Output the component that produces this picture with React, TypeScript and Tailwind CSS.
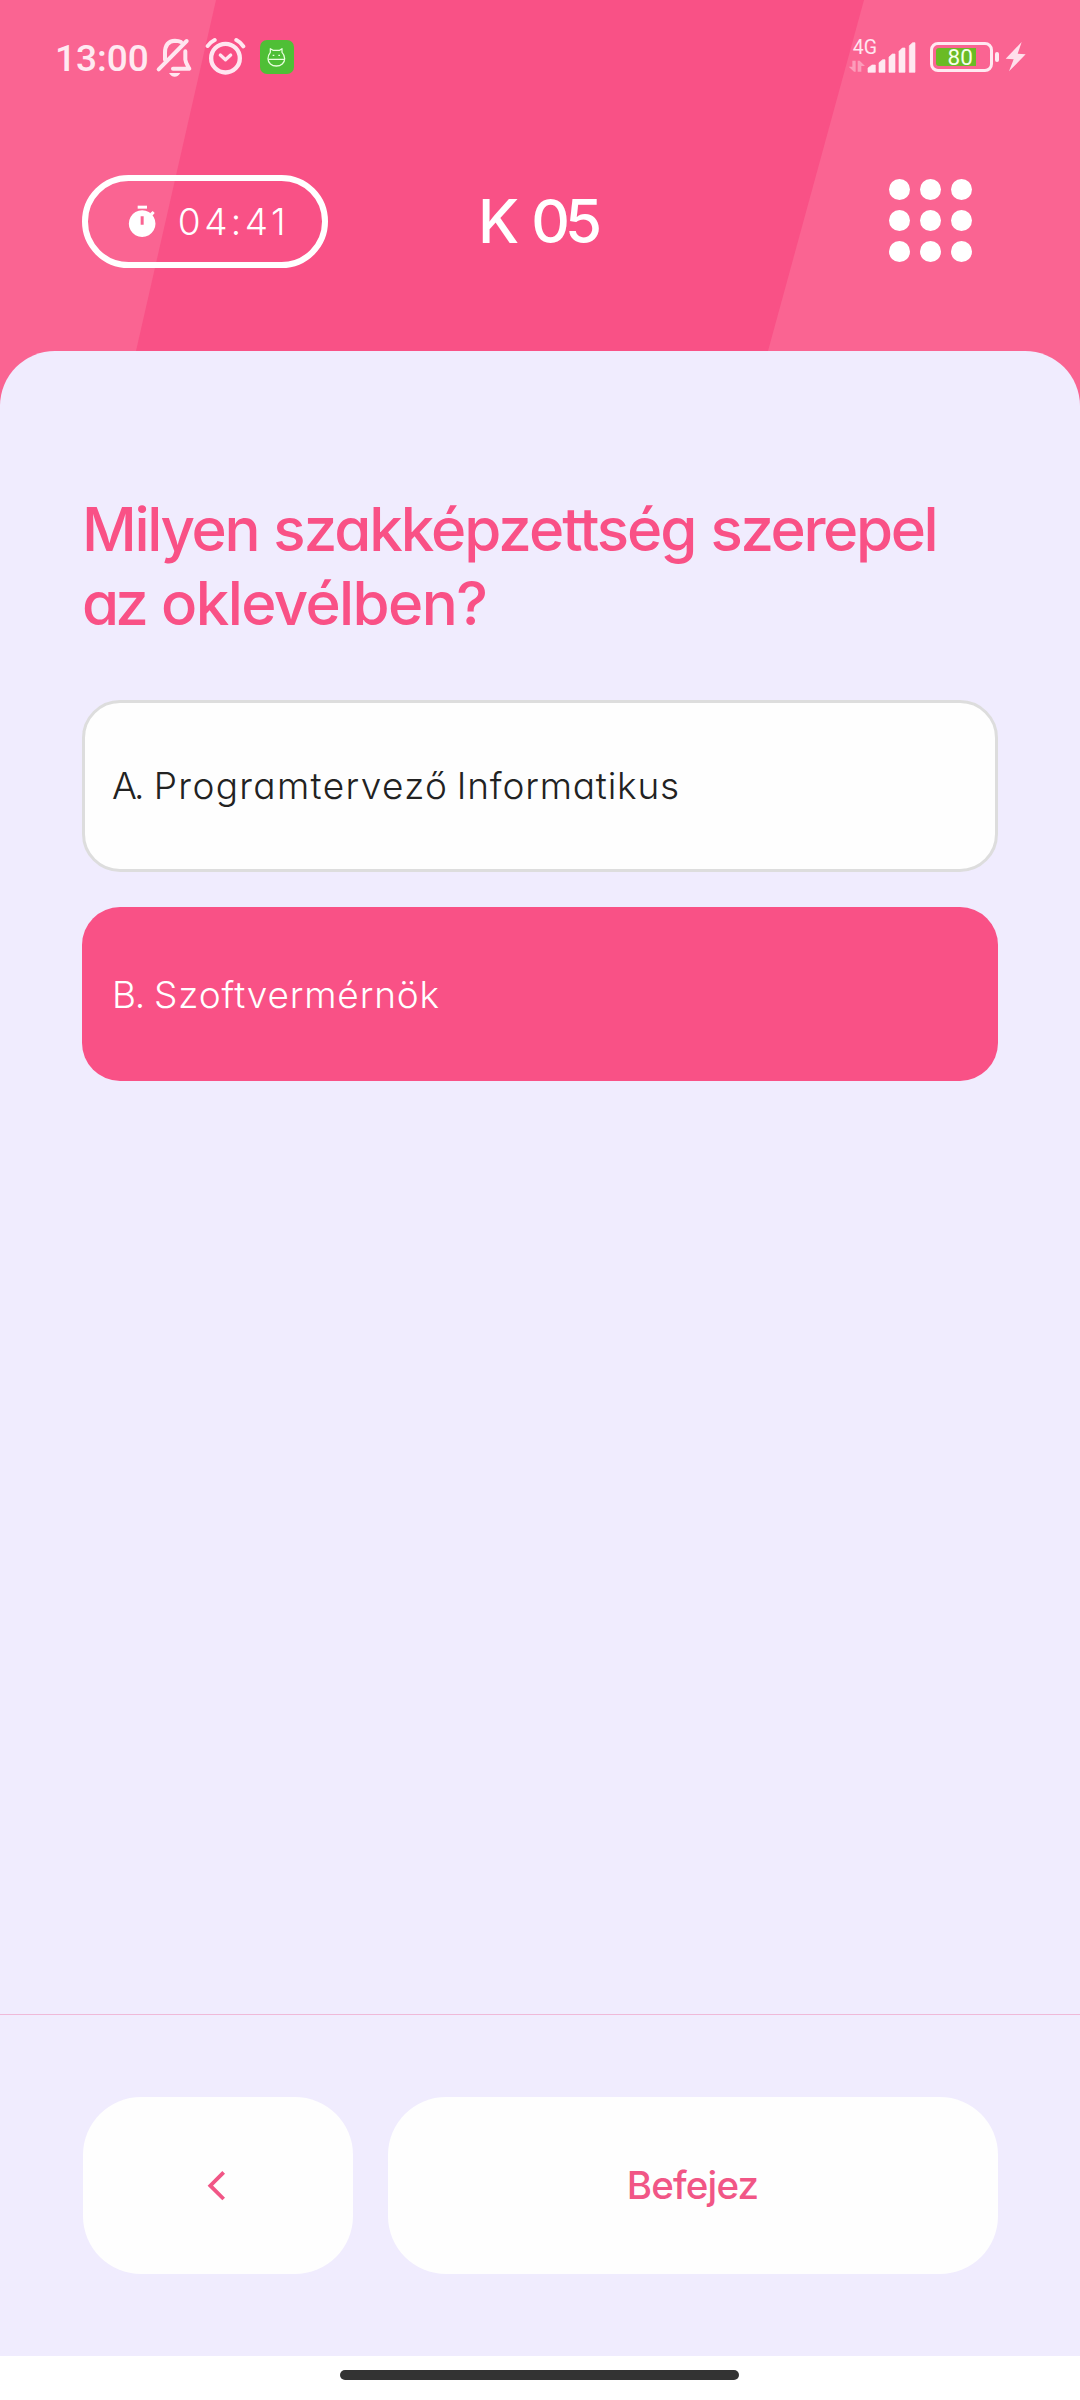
import type { ReactNode } from "react";

function BellOffIcon() {
  return (
    <svg viewBox="345 40 115 140" className="h-[46.67px] w-[38.33px]" fill="none" stroke="#ffe6f0" strokeWidth="12" strokeLinecap="round" strokeLinejoin="round">
      <path d="M375 120V99C375 76 386 64 405 63C412 63 418 64 423 67" />
      <path d="M436 95V120C437 131 444 139 448 147H399" />
      <path d="M440 64L356 149" />
      <path d="M387 160H421C417 167 411 171 404 171C397 171 391 167 387 160Z" fill="#ffe6f0" stroke="none" />
    </svg>
  );
}

function AlarmIcon() {
  return (
    <svg viewBox="495 40 125 140" className="h-[46.67px] w-[41.67px]" fill="none" stroke="#ffe6f0" strokeLinecap="round" strokeLinejoin="round">
      <circle cx="556.5" cy="115.5" r="43" strokeWidth="13" />
      <path d="M541 106L556.5 120L572 106" strokeWidth="10" />
      <path d="M503 79C508 71 516 65 524 61M589 61C597 65 605 72 610 80" strokeWidth="12" />
    </svg>
  );
}

function GreenAppIcon() {
  return (
    <div className="flex size-[34px] items-center justify-center rounded-[7px] bg-[#4fbf36]">
      <svg viewBox="682 82 57 60" className="h-5 w-[19px]" fill="none" stroke="#eaffdf" strokeWidth="3.8" strokeLinejoin="round">
        <path d="M692 98V87L700 92H720L727 87V98C732 103 735 110 735 117C735 130 724 139 710 139C696 139 685 130 685 117C685 110 688 103 692 98Z" />
        <path d="M686 119H734M699 107H704M716 107H721" />
      </svg>
    </div>
  );
}

function Signal() {
  return (
    <div className="relative">
      <svg viewBox="55 40 207 140" className="h-[46.67px] w-[69px]" fill="#ffe9f1">
        <g opacity="0.42">
          <path d="M68 123H78V156H73L57 141H68Z" />
          <path d="M84 156V123H90L106 139H95V156Z" />
        </g>
        <g stroke="#ffe9f1" strokeWidth="2" strokeLinejoin="round">
          <path d="M115 158V145L127 136H137V158Z" />
          <path d="M148 158V129L159 120H166V158Z" />
          <path d="M178 158V112L188 103H196V158Z" />
          <path d="M208 158V95L218 85H226V158Z" />
          <path d="M239 158V78L249 69H256V158Z" />
        </g>
      </svg>
      <span className="absolute top-[3px] left-[4.5px] font-['Roboto',sans-serif] text-[19.5px] leading-[24px] text-[#ffe6f0]">4G</span>
    </div>
  );
}

function Battery() {
  return (
    <div className="flex items-center gap-[2px]">
      <div className="flex h-[30px] w-[63px] rounded-[8px] border-[3px] border-[#ffe9f1] p-[3px]">
        <div className="relative h-[18px] w-[39.5px] rounded-l-[3px] bg-[#6abb25]">
          <span className="absolute top-[0.5px] left-[11.5px] font-['Roboto',sans-serif] text-[22.5px] leading-[18px] font-[450] text-[#f4ffe9]">80</span>
        </div>
      </div>
      <div className="h-[10px] w-[4px] rounded-[2px] bg-[#ffe9f1]" />
    </div>
  );
}

function StatusBar() {
  return (
    <div className="flex h-[112px] items-center pr-[54px] pl-[55px]">
      <span className="mt-[6px] font-['Roboto',sans-serif] text-[37px] leading-[40px] font-medium text-[#ffe9f1]">13:00</span>
      <div className="ml-[6px] flex items-center pt-px">
        <BellOffIcon />
        <div className="ml-[11.7px]">
          <AlarmIcon />
        </div>
        <div className="ml-[13.3px]">
          <GreenAppIcon />
        </div>
      </div>
      <div className="ml-auto flex items-center pt-px">
        <Signal />
        <div className="ml-[12.7px]">
          <Battery />
        </div>
        <svg viewBox="525 66 63 96" className="ml-[6px] h-8 w-[21px]" fill="#ffdfeb">
          <path d="M575 69L527 119L551 121L537 157L587 106L563 104Z" />
        </svg>
      </div>
    </div>
  );
}

function StopwatchIcon() {
  return (
    <svg viewBox="200 160 92 110" className="h-[36.67px] w-[30.67px]" fill="#fff">
      <rect x="232" y="168" width="28" height="9" />
      <path fillRule="evenodd" d="M245.5 182A40 40 0 1 1 245.4 182ZM241 200V225H250V200Z" />
      <path d="M269 191L277 184L283 190L276 198Z" />
    </svg>
  );
}

function Header() {
  return (
    <header className="relative h-[351px] bg-[#f95186]">
      <svg viewBox="0 0 1080 351" className="absolute inset-0 h-full w-full" fill="#fa6492">
        <path d="M0 0H216L136 351H0Z" />
        <path d="M864 0H1080V351H768Z" />
      </svg>
      <div className="relative">
        <StatusBar />
        <div className="mt-[62px] flex h-[93px] items-center px-[82px]">
          <div className="mt-px flex h-[93px] w-[246px] items-center rounded-full border-[6px] border-white pl-[38.7px]">
            <StopwatchIcon />
            <span className="mt-px ml-[20.5px] font-['Inter',sans-serif] text-[37px] leading-none font-[300] tracking-[3.45px] text-white">04:41</span>
          </div>
          <h1 className="ml-[150px] font-['Inter',sans-serif] text-[60px] leading-none font-[460] whitespace-nowrap text-white">
            K <span className="-ml-[4px] tracking-[-5px]">05</span>
          </h1>
          <div className="mr-[26px] ml-auto grid grid-cols-3 gap-[10px]">
            {Array.from({ length: 9 }, (_, i) => (
              <span key={i} className="size-[21px] rounded-full bg-white" />
            ))}
          </div>
        </div>
      </div>
    </header>
  );
}

function Answer({ selected = false, children }: { selected?: boolean; children: ReactNode }) {
  return (
    <div
      className={
        selected
          ? "flex h-[173.5px] items-center rounded-[38px] bg-[#f95186] pt-px pl-[30px] text-white"
          : "flex h-[172px] items-center rounded-[38px] border-[3px] border-[#dddddd] bg-[#fefefe] pb-px pl-[27px] text-[#222222]"
      }
    >
      <p className="text-[37px] leading-none font-[300] whitespace-nowrap">{children}</p>
    </div>
  );
}

export default function App() {
  return (
    <div className="flex h-[2400px] w-[1080px] flex-col overflow-hidden bg-[#fa6492] font-['Inter',sans-serif] [font-feature-settings:'cv11']">
      <Header />
      <main className="flex-1 rounded-t-[55px] bg-[#f0ecfe] px-[82px] pt-[141px]">
        <h2 className="text-[60px] leading-[74px] font-[480] tracking-[-1px] whitespace-nowrap text-[#f95186]">
          <span className="tracking-[-2.3px]">Milyen</span> <span className="tracking-[-2px]">szakképzettség</span>{" "}
          <span className="tracking-[-2.4px]">szerepel</span>
          <br />
          <span className="tracking-[-3.8px]">az</span> <span className="ml-px tracking-[-1.6px]">oklevélben?</span>
        </h2>
        <div className="mt-[60px] flex flex-col gap-[35px]">
          <Answer>
            <span className="tracking-[-3px]">A.</span> <span className="ml-[2px] tracking-[1.35px]">Programtervező</span>{" "}
            <span className="-ml-[2px] tracking-[0.8px]">Informatikus</span>
          </Answer>
          <Answer selected>
            <span className="tracking-[-1.4px]">B.</span> <span className="tracking-[0.83px]">Szoftvermérnök</span>
          </Answer>
        </div>
      </main>
      <footer className="flex h-[342px] items-start gap-[35px] border-t border-[#efb9d8] bg-[#f0ecfe] px-[82.5px] pt-[82px]">
        <button className="flex h-[177px] w-[270px] items-center justify-center rounded-[58px] bg-[#fefefe] pr-[3px]">
          <svg viewBox="440 536 60 100" className="h-[33.33px] w-5" fill="none" stroke="#f15686" strokeWidth="11.5">
            <path d="M493 546L453 586L493 626" />
          </svg>
        </button>
        <button className="flex h-[177px] flex-1 items-center justify-center rounded-[58px] bg-[#fefefe] text-[38.5px] leading-none font-[500] tracking-[-0.8px] text-[#f15686]">
          Befejez
        </button>
      </footer>
      <div className="flex h-[44px] justify-center bg-white pt-[14px] pr-px">
        <div className="h-[10px] w-[399px] rounded-full bg-[#333333]" />
      </div>
    </div>
  );
}
